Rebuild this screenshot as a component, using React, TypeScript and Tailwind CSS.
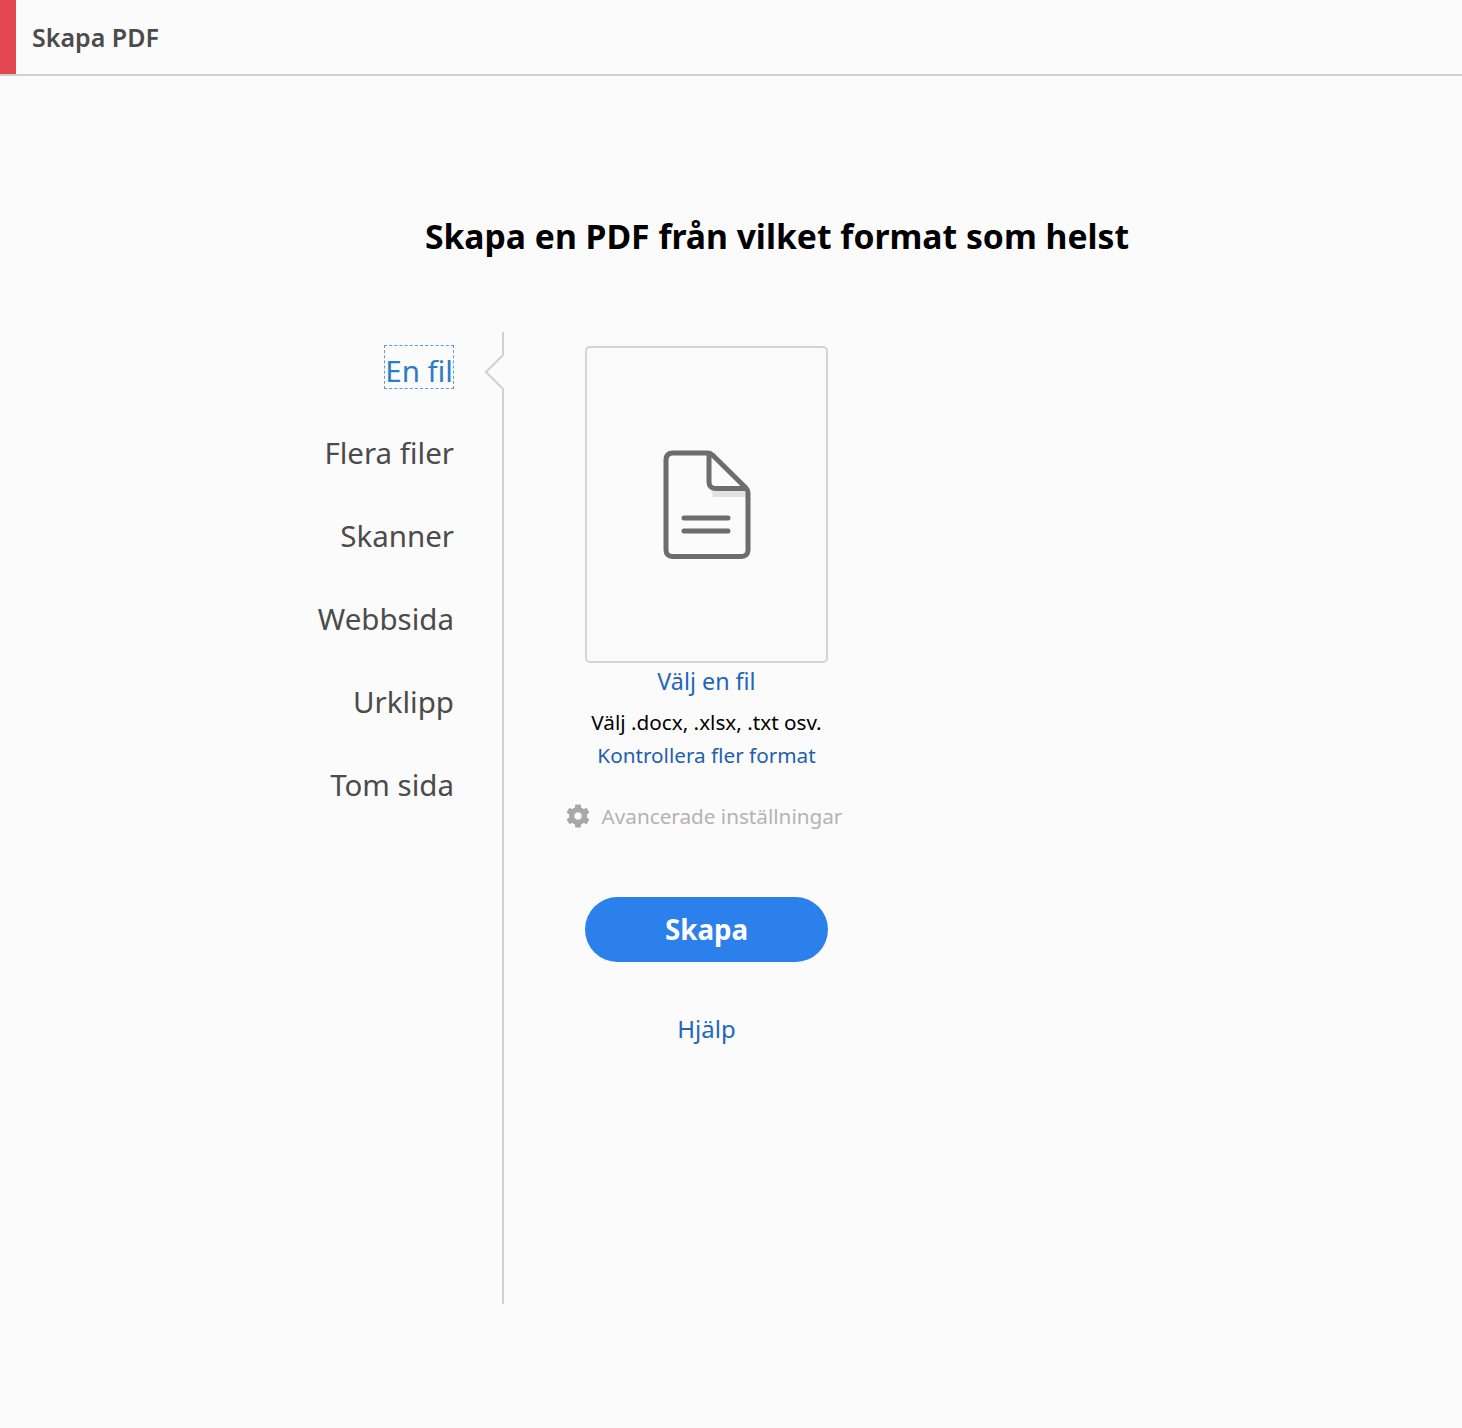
import React from 'react';
import { FaCog } from 'react-icons/fa';

const font = "font-['Noto_Sans','Open_Sans',sans-serif]";

const tabs = ['En fil', 'Flera filer', 'Skanner', 'Webbsida', 'Urklipp', 'Tom sida'];

const FileIcon = () => (
  <svg width="88" height="110" viewBox="0 0 88 110" fill="none">
    <path d="M48 40h37v7H50z" fill="#e2e2e2" />
    <path
      d="M10 3h35c2 0 3 .6 4.500 2L83 38c1.400 1.400 2 2.500 2 4.500V100c0 4-2.500 6.500-6.500 6.500h-69C5.500 106.500 3 104 3 100V10c0-4.500 2.500-7 7-7z"
      stroke="#6d6d6d"
      strokeWidth="5"
      strokeLinejoin="round"
    />
    <path d="M46 4v28c0 4 2.500 6.500 6.500 6.500H84" stroke="#6d6d6d" strokeWidth="5" />
    <path d="M21 68h44M21 81h44" stroke="#6d6d6d" strokeWidth="5" strokeLinecap="round" />
  </svg>
);

export default function App() {
  return (
    <div className={`${font} min-h-[1428px] bg-[#fbfbfb]`}>
      <header className="flex h-[76px] border-b-2 border-[#cfcfcf]">
        <div className="w-4 bg-[#e34850]" />
        <h1 className="ml-4 self-center pt-[2px] text-[25px] font-semibold text-[#4b4b4b]">Skapa PDF</h1>
      </header>

      <h2 className="mt-[135px] ml-[92px] text-center text-[33.700px] leading-[50px] font-bold text-black">
        Skapa en PDF från vilket format som helst
      </h2>

      <div className="mt-[71px] flex">
        <nav className="relative flex h-[972px] w-[504px] flex-col items-end border-r-2 border-[#d0d0d0] pt-[13px] pr-[48px]">
          {tabs.map((tab, i) => (
            <button
              key={tab}
              className={
                i === 0
                  ? 'mb-[39px] h-[44px] border border-dashed border-[#5b9bdc] pt-[6px] text-[29.500px] leading-[38px] text-[#2d7bc9]'
                  : 'mb-[39px] h-[44px] pt-[6px] text-[29.500px] leading-[38px] text-[#4b4b4b]'
              }
            >
              {tab}
            </button>
          ))}
          {/* notch pointing at the selected tab */}
          <div className="absolute top-[27px] right-[-14px] h-[26px] w-[26px] rotate-45 border-b-2 border-l-2 border-[#d0d0d0] bg-[#fbfbfb]" />
        </nav>

        <main className="ml-[81px] flex w-[243px] flex-col items-center pt-[14px]">
          <div className="flex h-[317px] w-[243px] items-center justify-center rounded-[5px] border-2 border-[#d4d4d4]">
            <FileIcon />
          </div>
          <a className="mt-[1px] text-[23.300px] leading-[34px] text-[#1f68b8]">Välj en fil</a>
          <p className="mt-[8px] whitespace-nowrap text-[20.700px] leading-[32px] text-black">Välj .docx, .xlsx, .txt osv.</p>
          <a className="mt-[1px] whitespace-nowrap text-[20.700px] leading-[32px] text-[#1f5fae]">Kontrollera fler format</a>
          <div className="mt-[29px] mr-[5px] flex items-center gap-[12px] whitespace-nowrap text-[20.700px] leading-[32px] text-[#b3b3b3]">
            <FaCog size={24} className="text-[#a8a8a8]" />
            Avancerade inställningar
          </div>
          <button className="mt-[65px] h-[65px] w-[243px] rounded-full bg-[#2c80ec] text-[27.700px] font-bold text-white">
            Skapa
          </button>
          <a className="mt-[49px] text-[24px] leading-[36px] text-[#1f68b8]">Hjälp</a>
        </main>
      </div>
    </div>
  );
}
